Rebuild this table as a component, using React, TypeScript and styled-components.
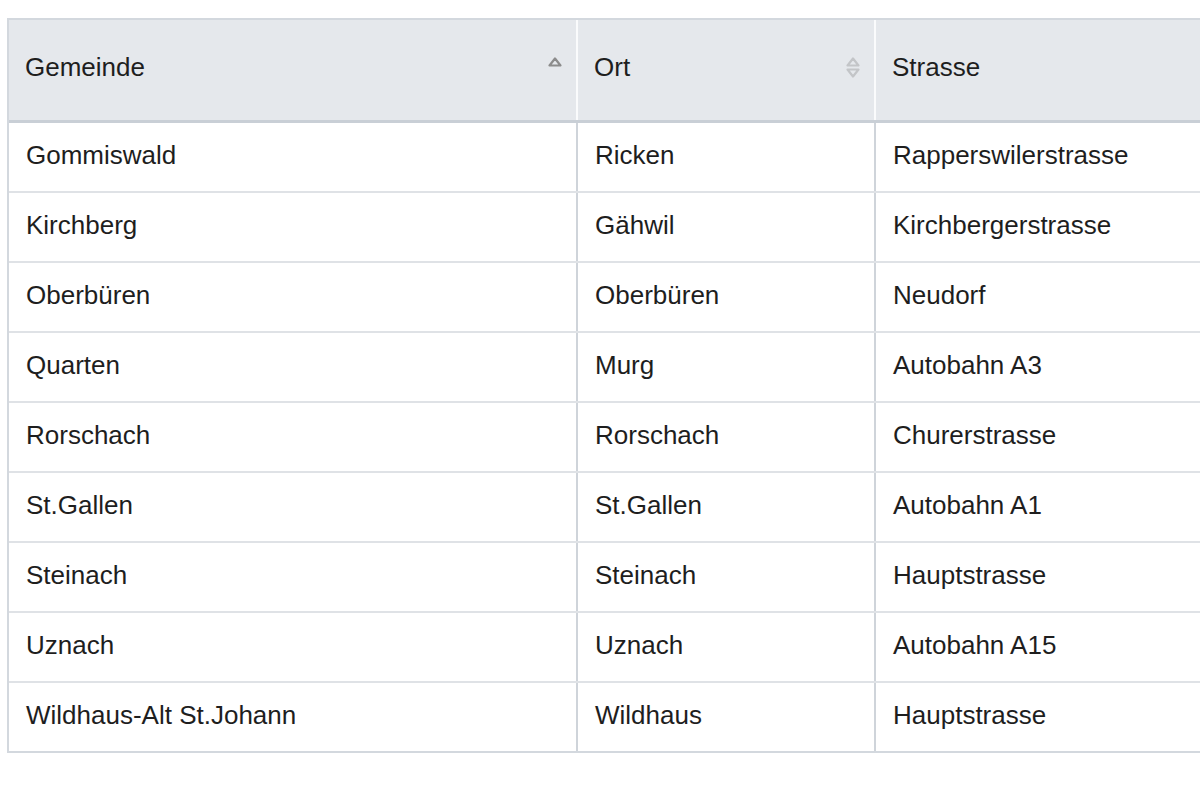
import React from "react";
import styled, { createGlobalStyle } from "styled-components";

const Global = createGlobalStyle`
  html, body { margin: 0; padding: 0; background: #ffffff; overflow: hidden; }
  body { font-family: "Liberation Sans", Arial, Helvetica, sans-serif; }
`;

const Page = styled.div`
  width: 1200px;
  height: 800px;
  overflow: hidden;
  padding: 18px 0 0 7px;
  box-sizing: border-box;
`;

const Table = styled.div`
  width: 1400px;
  border: 2px solid #d3d8de;
  border-right: none;
  box-sizing: border-box;
`;

const Row = styled.div<{ $head?: boolean; $last?: boolean }>`
  display: grid;
  grid-template-columns: 569px 298px 1fr;
  height: ${(p) => (p.$head ? "100px" : "68px")};
  background: ${(p) => (p.$head ? "#e5e8ec" : "#ffffff")};
  border-bottom: ${(p) =>
    p.$head ? "3px solid #c9cfd6" : p.$last ? "none" : "2px solid #dfe2e6"};
`;

const Cell = styled.div<{ $head?: boolean; $last?: boolean }>`
  display: flex;
  align-items: center;
  justify-content: space-between;
  box-sizing: border-box;
  padding: ${(p) => (p.$head ? "0 13px 6px 16px" : "0 14px 4px 17px")};
  border-right: ${(p) =>
    p.$last ? "none" : p.$head ? "2px solid #fafbfc" : "2px solid #cfd4da"};
  font-size: 26px;
  color: #1e1e1e;
  white-space: nowrap;
`;

const SortIcon = styled.svg`
  flex: none;
`;

const UpArrow = ({ color }: { color: string }) => (
  <path
    d="M2.5 10.5 L8 3.5 L13.5 10.5 Z"
    fill="none"
    stroke={color}
    strokeWidth={2.2}
    strokeLinejoin="round"
  />
);

const DownArrow = ({ color }: { color: string }) => (
  <path
    d="M2.5 14.5 L8 21.5 L13.5 14.5 Z"
    fill="none"
    stroke={color}
    strokeWidth={2.2}
    strokeLinejoin="round"
  />
);

const SortAsc = () => (
  <SortIcon width="16" height="25" viewBox="0 0 16 25">
    <UpArrow color="#8c8c8c" />
  </SortIcon>
);

const SortBoth = () => (
  <SortIcon width="16" height="25" viewBox="0 0 16 25">
    <UpArrow color="#c3c5c8" />
    <DownArrow color="#c3c5c8" />
  </SortIcon>
);

const rows: [string, string, string][] = [
  ["Gommiswald", "Ricken", "Rapperswilerstrasse"],
  ["Kirchberg", "Gähwil", "Kirchbergerstrasse"],
  ["Oberbüren", "Oberbüren", "Neudorf"],
  ["Quarten", "Murg", "Autobahn A3"],
  ["Rorschach", "Rorschach", "Churerstrasse"],
  ["St.Gallen", "St.Gallen", "Autobahn A1"],
  ["Steinach", "Steinach", "Hauptstrasse"],
  ["Uznach", "Uznach", "Autobahn A15"],
  ["Wildhaus-Alt St.Johann", "Wildhaus", "Hauptstrasse"],
];

export default function App() {
  return (
    <>
      <Global />
      <Page>
        <Table>
          <Row $head>
            <Cell $head>
              <span>Gemeinde</span>
              <SortAsc />
            </Cell>
            <Cell $head>
              <span>Ort</span>
              <SortBoth />
            </Cell>
            <Cell $head $last>
              <span>Strasse</span>
            </Cell>
          </Row>
          {rows.map((r, i) => (
            <Row key={i} $last={i === rows.length - 1}>
              <Cell>{r[0]}</Cell>
              <Cell>{r[1]}</Cell>
              <Cell $last>{r[2]}</Cell>
            </Row>
          ))}
        </Table>
      </Page>
    </>
  );
}
